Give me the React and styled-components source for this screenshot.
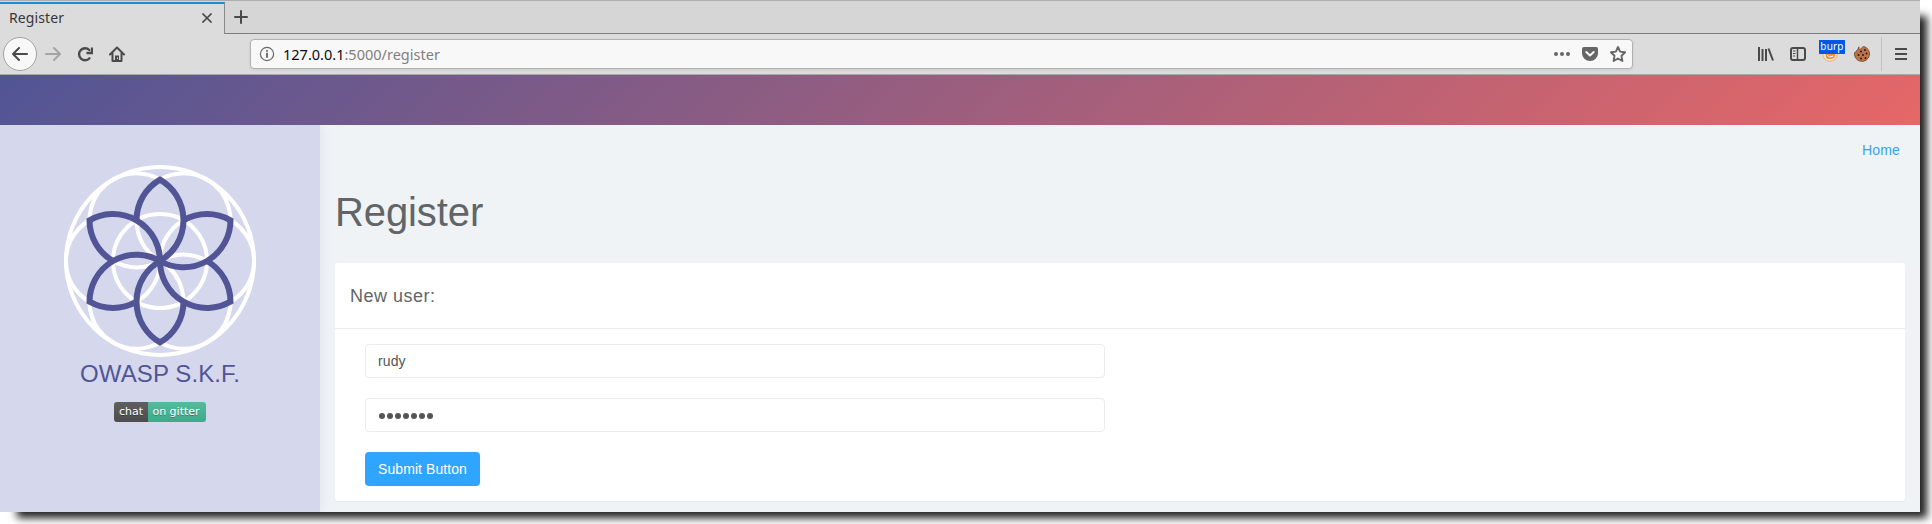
import React from "react";
import styled, { createGlobalStyle } from "styled-components";

const Global = createGlobalStyle`
  *, *::before, *::after { box-sizing: border-box; }
  body { margin: 0; background: #fff; font-family: "Liberation Sans", Arial, sans-serif; }
`;

const Desktop = styled.div`
  width: 1932px;
  height: 524px;
  overflow: hidden;
  background: #fff;
`;
const Window = styled.div`
  width: 1920px;
  height: 512px;
  display: flex;
  flex-direction: column;
  background: #eff3f6;
  box-shadow: 12px 11px 8px -5px #222;
`;
const TabStrip = styled.div`
  height: 34px;
  display: flex;
  background: #d6d6d6;
  border-top: 1px solid #aeaeae;
  font-family: "Noto Sans", sans-serif;
`;
const Tab = styled.div`
  width: 225px;
  margin-top: 1px;
  padding: 0 11px 2px 9px;
  display: flex;
  align-items: center;
  justify-content: space-between;
  background: #dcdcdc;
  border-top: 2px solid #1c8dce;
  border-right: 1px solid #8b8b8b;
  color: #363636;
  font-size: 14px;
  line-height: 16px;
`;
const TabLabel = styled.span`
  display: inline-block;
  margin-top: -1px;
  letter-spacing: 0.1px;
`;
const TabRest = styled.div`
  flex: 1;
  padding: 7px 0 0 8px;
  border-bottom: 1px solid #7e7e80;
`;
const NavBar = styled.div`
  height: 41px;
  display: flex;
  align-items: center;
  background: #dcdcdc;
  border-bottom: 1px solid #a9a9a9;
  padding: 0 11px 1px 3px;
`;
const BackButton = styled.div`
  width: 34px;
  height: 34px;
  display: grid;
  place-items: center;
  border-radius: 50%;
  border: 1px solid #a3a3a3;
  background: #f8f8f8;
`;
const NavIcons = styled.div`
  display: flex;
  width: 213px;
  gap: 16px;
  padding-left: 8px;
`;
const UrlBar = styled.div`
  width: 1383px;
  height: 30px;
  display: flex;
  align-items: center;
  padding: 0 6px 0 8px;
  border: 1px solid #b1b1b1;
  border-radius: 4px;
  background: #f8f8f8;
  box-shadow: 0 1px 3px rgba(0, 0, 0, 0.08);
`;
const Url = styled.span`
  flex: 1;
  margin-left: 8px;
  color: #808080;
  font: 14.67px "Noto Sans", sans-serif;
  b { color: #0c0c0d; font-weight: 400; }
`;
const UrlText = styled.span`
  display: inline-block;
  transform: scaleX(${(p) => p.$scale});
  transform-origin: 0 50%;
`;
const UrlActions = styled.div`
  display: flex;
  gap: 12px;
`;
const Tools = styled.div`
  margin-left: auto;
  display: flex;
  align-items: center;
  gap: 16px;
`;
const BurpSlot = styled.div`
  position: relative;
  width: 16px;
  height: 16px;
  svg { display: block; }
`;
const BurpBadge = styled.span`
  position: absolute;
  left: -3px;
  top: -6px;
  width: 26px;
  height: 14px;
  background: #0059e6;
  color: #fff;
  text-align: center;
  font: 10px/12px "Noto Sans", sans-serif;
  letter-spacing: 0.2px;
`;
const Divider = styled.i`
  width: 1px;
  height: 34px;
  margin: 0 -5px 0 -5px;
  background: #c2c2c2;
`;
const Hero = styled.div`
  height: 50px;
  background: linear-gradient(135deg, #515595 0%, #e66767 100%);
`;
const Page = styled.div`
  flex: 1;
  display: flex;
`;
const Sidebar = styled.aside`
  width: 320px;
  padding-top: 40px;
  display: flex;
  flex-direction: column;
  align-items: center;
  background: #d5d7ed;
  box-shadow: 0 0 12px rgba(0, 0, 0, 0.07);
  clip-path: inset(0 -16px 0 0);
  svg { display: block; }
`;
const Brand = styled.div`
  margin-top: 3px;
  color: #515595;
  font-size: 24px;
  line-height: 28px;
  letter-spacing: 0.1px;
`;
const Badge = styled.div`
  display: flex;
  width: 92px;
  height: 20px;
  margin-top: 14px;
  overflow: hidden;
  border-radius: 3px;
  color: #fff;
  font: 11px/20px "DejaVu Sans", sans-serif;
  text-align: center;
  text-shadow: 0 1px rgba(1, 1, 1, 0.3);
`;
const BadgePart = styled.span`
  width: ${(p) => p.$width}px;
  padding-right: ${(p) => p.$inset || 0}px;
  background: linear-gradient(rgba(187, 187, 187, 0.1), rgba(0, 0, 0, 0.1)), ${(p) => p.$color};
`;
const Content = styled.main`
  flex: 1;
  padding: 0 15px;
  color: #616567;
`;
const TopLinks = styled.nav`
  height: 50px;
  padding: 0 5px;
  text-align: right;
  font-size: 14px;
  line-height: 51px;
  letter-spacing: 0.15px;
  color: #34a4fb;
`;
const Title = styled.h1`
  margin: 14px 0 0;
  font-size: 40px;
  font-weight: 400;
  line-height: 46px;
  letter-spacing: -0.1px;
`;
const Card = styled.section`
  margin-top: 28px;
  height: 238px;
  background: #fff;
  border-radius: 3px;
  box-shadow: 0 1px 1px rgba(0, 0, 0, 0.05);
`;
const CardHeader = styled.div`
  height: 66px;
  padding: 0 15px;
  font-size: 18px;
  line-height: 66px;
  letter-spacing: 0.5px;
  border-bottom: 1px solid #e9ebed;
`;
const Form = styled.div`
  display: flex;
  flex-direction: column;
  align-items: flex-start;
  gap: 20px;
  padding: 15px 30px;
`;
const Input = styled.div`
  width: 740px;
  height: 34px;
  display: flex;
  align-items: center;
  gap: 2px;
  padding: 0 12px;
  border: 1px solid #ececec;
  border-radius: 4px;
  color: #555;
  font-size: 14px;
  letter-spacing: 0.1px;
`;
const Dot = styled.i`
  width: 6px;
  height: 6px;
  margin: 2px -1px 0 1px;
  border-radius: 50%;
  background: #555;
`;
const Submit = styled.button`
  width: 115px;
  height: 34px;
  padding: 0;
  border: 0;
  border-radius: 4px;
  background: #30a5ff;
  color: #fff;
  font: 14px "Liberation Sans", Arial, sans-serif;
  letter-spacing: 0.08px;
`;

const Icon = ({ children, size = 16, color = "#4a4a4b", width = 2 }) => (
  <svg width={size} height={size} viewBox="0 0 16 16" fill="none" stroke={color} strokeWidth={width} strokeLinecap="round" strokeLinejoin="round">
    {children}
  </svg>
);

const PETALS = [0, 60, 120, 180, 240, 300];

const Logo = () => (
  <svg width="192" height="192" viewBox="-96 -96 192 192" fill="none">
    <g stroke="#fff" strokeWidth="4">
      <circle r="94" />
      <circle r="47" />
      {PETALS.map((a) => <circle key={a} cx="47" r="47" transform={`rotate(${a})`} />)}
    </g>
    <g stroke="#515595" strokeWidth="6">
      {PETALS.map((a) => (
        <path key={a} d="M-23.5-40.7A47 47 0 0 1 0-81.4A47 47 0 0 1 0 0" transform={`rotate(${a})`} />
      ))}
    </g>
  </svg>
);

export default function App() {
  return (
    <Desktop>
      <Global />
      <Window>
        <TabStrip>
          <Tab>
            <TabLabel>Register</TabLabel>
            <Icon size={12} width={2}><path d="M2.500 2.500l11 11M13.500 2.500l-11 11" /></Icon>
          </Tab>
          <TabRest>
            <Icon><path d="M8 2v12M2 8h12" /></Icon>
          </TabRest>
        </TabStrip>
        <NavBar>
          <BackButton><Icon><path d="M15 8H1.500M7 2L1 8l6 6" /></Icon></BackButton>
          <NavIcons>
            <Icon color="#a4a4a4"><path d="M1 8h13.500M9 2l6 6-6 6" /></Icon>
            <Icon width={2.3}><path d="M12.500 12.300A6 6 0 1 1 12.300 4" /><path d="M15 1.500v5.500H9.500" strokeLinecap="butt" strokeLinejoin="miter" /></Icon>
            <Icon><path d="M1 8.500l7-7 7 7M3.500 7.500V15h9V7.500" /><path d="M8 15V9.500" strokeWidth="4" strokeLinecap="butt" /><path d="M8.500 11.500v1.500" stroke="#dcdcdc" strokeWidth="1" strokeLinecap="butt" /></Icon>
          </NavIcons>
          <UrlBar>
            <Icon color="#6a6a6a" width={1.2}><circle cx="8" cy="8" r="6.600" /><path d="M8 7.500v3.500M8 4.800v.1" strokeWidth="1.900" /></Icon>
            <Url><UrlText $scale={0.99}><b>127.0.0.1</b>:5000/register</UrlText></Url>
            <UrlActions>
              <Icon color="#666"><g fill="#666" stroke="none"><circle cx="2" cy="8" r="2" /><circle cx="8" cy="8" r="2" /><circle cx="14" cy="8" r="2" /></g></Icon>
              <Icon color="#666"><path d="M2 1h12a2 2 0 0 1 2 2v4.500a8 7.500 0 0 1-16 0V3a2 2 0 0 1 2-2z" fill="#666" stroke="none" /><path d="M4.300 6L8 9.500 11.700 6" stroke="#f8f8f8" /></Icon>
              <Icon color="#666" width={1.900}><path d="M8 1l2.100 4.600 5 .7-3.600 3.500.9 5.200L8 12.500 3.600 15l.9-5.200L.9 6.300l5-.7z" /></Icon>
            </UrlActions>
          </UrlBar>
          <Tools>
            <Icon><path d="M1 1v14M4.500 3v12M8 3v12M10.500 2.500L15 14.500" strokeLinecap="butt" /></Icon>
            <Icon><rect x="1" y="2" width="14" height="12" rx="2" /><path d="M7.500 2v12" strokeWidth="1.500" /><path d="M3 5h2.500M3 7.500h2.500M3 10h2" strokeWidth="1" strokeLinecap="butt" /></Icon>
            <BurpSlot>
              <svg width="16" height="16" viewBox="0 0 16 16">
                <circle cx="8" cy="8" r="7.300" fill="#e9e6e0" stroke="#efb780" strokeWidth="1.200" />
                <path d="M3 5h10.500l-1 6.500L10 13H6l-2-1.500z" fill="#f09235" />
                <path d="M5 9l2.500 2 3.500-.8" stroke="#fff" fill="none" />
              </svg>
              <BurpBadge>burp</BurpBadge>
            </BurpSlot>
            <svg width="16" height="16" viewBox="0 0 16 16">
              <path d="M5 .8Q4 4 7 3Q8 1 9.500.4A7.600 7.600 0 1 1 .5 6.500Q3 6 2.500 4.500Q4 4 5 .8z" fill="#ba7448" stroke="#6d4733" strokeWidth=".8" />
              <g fill="#2d1a13"><circle cx="7" cy="5.500" r="1" /><circle cx="11" cy="4" r="1" /><circle cx="4.500" cy="9" r="1" /><circle cx="9" cy="9" r="1" /><circle cx="7" cy="12.500" r="1" /><circle cx="12.500" cy="7.500" r=".9" /><circle cx="11.500" cy="12" r="1" /></g>
            </svg>
            <Divider />
            <Icon><path d="M2 3h12M2 8h12M2 13h12" strokeLinecap="butt" /></Icon>
          </Tools>
        </NavBar>
        <Hero />
        <Page>
          <Sidebar>
            <Logo />
            <Brand>OWASP S.K.F.</Brand>
            <Badge>
              <BadgePart $width={34} $color="#555">chat</BadgePart>
              <BadgePart $width={58} $inset={2} $color="#46bc99">on gitter</BadgePart>
            </Badge>
          </Sidebar>
          <Content>
            <TopLinks>Home</TopLinks>
            <Title>Register</Title>
            <Card>
              <CardHeader>New user:</CardHeader>
              <Form>
                <Input>rudy</Input>
                <Input>{Array.from({ length: 7 }, (_, i) => <Dot key={i} />)}</Input>
                <Submit>Submit Button</Submit>
              </Form>
            </Card>
          </Content>
        </Page>
      </Window>
    </Desktop>
  );
}
